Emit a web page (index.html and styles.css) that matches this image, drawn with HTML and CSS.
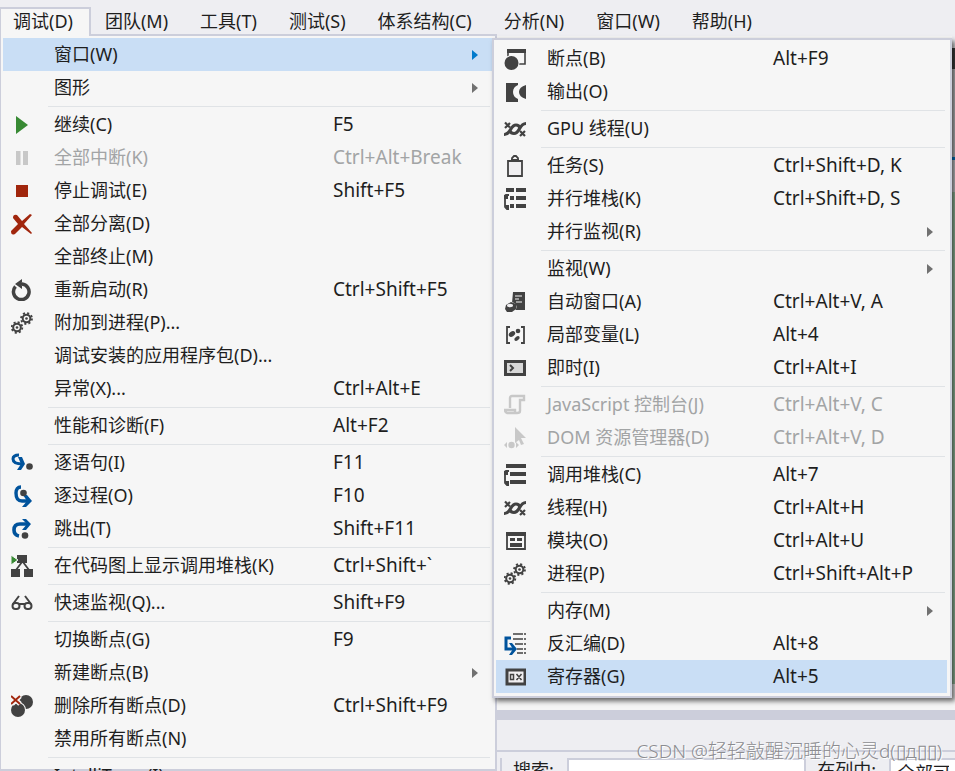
FILE: index.html
```html
<!DOCTYPE html>
<html lang="zh-CN">
<head>
<meta charset="utf-8">
<title>调试</title>
<link rel="stylesheet" href="styles.css">
</head>
<body>
<svg class="defs" aria-hidden="true">
  <symbol id="play" viewBox="0 0 22 22"><path fill="#388a34" d="M5 2L17 11L5 20z"/></symbol>
  <symbol id="pause" viewBox="0 0 22 22"><path fill="#c8c8c8" d="M5 4h4.500v14H5zM12 4h5v14h-5z"/></symbol>
  <symbol id="stop" viewBox="0 0 22 22"><path fill="#a1260d" d="M5 5h12v12H5z"/></symbol>
  <symbol id="detach" viewBox="0 0 22 22"><path fill="#a1260d" d="M2 5Q2 1 6 2L11 8L19 1L21 2L13 11L21 20L20 21L11 14L4 21Q0 23 0 18L7 11z"/></symbol>
  <symbol id="restart" viewBox="0 0 22 22"><path fill="none" stroke="#424242" stroke-width="3.500" d="M4.500 7.500A7.800 7.800 0 1 0 11 5H7"/><path fill="#424242" d="M4 5L11 0V3L9 5L11 7V10z"/></symbol>
  <symbol id="gears" viewBox="0 0 22 22"><g fill="none" stroke="#424242"><circle cx="15.500" cy="6.500" r="3.800" stroke-width="2"/><circle cx="15.500" cy="6.500" r="5.500" stroke-width="1.800" stroke-dasharray="2.100 2.220"/><circle cx="6" cy="15.500" r="3.800" stroke-width="2"/><circle cx="6" cy="15.500" r="5.300" stroke-width="1.800" stroke-dasharray="2.100 2.060"/></g><circle cx="15.500" cy="6.500" r="1.300" fill="#424242"/><circle cx="6" cy="15.500" r="1.300" fill="#424242"/></symbol>
  <symbol id="into" viewBox="0 0 22 22"><path fill="none" stroke="#00539c" stroke-width="3" d="M8 3Q2 3 2 7Q2 12 12 12"/><path fill="#00539c" d="M7 5h4l3 7l-4 6H6l4-6z"/><circle cx="18.500" cy="14.500" r="3.300" fill="#424242"/></symbol>
  <symbol id="over" viewBox="0 0 22 22"><path fill="none" stroke="#00539c" stroke-width="3.400" d="M10 2Q5 2 5 8Q5 16 11 16H17"/><path fill="#00539c" d="M12 10h4l5 6l-6 6h-4l5-6z"/><circle cx="12.500" cy="8" r="3.300" fill="#424242"/></symbol>
  <symbol id="out" viewBox="0 0 22 22"><path fill="none" stroke="#00539c" stroke-width="3.600" d="M8 18Q3 17 3 12Q3 6 9 6H17"/><path fill="#00539c" d="M11 1h4l5 5l-5 6h-4l5-6z"/><circle cx="14" cy="17.500" r="3.300" fill="#424242"/></symbol>
  <symbol id="map" viewBox="0 0 22 22"><path fill="#424242" d="M6 0h10v8H6zM0 14h9v8H0zM13 14h9v8h-9z"/><path fill="none" stroke="#424242" stroke-width="1.800" d="M11 7L5 15M12 7L18 15"/><path fill="#388a34" stroke="#f6f6f6" d="M0 0L7 5L0 10z"/></symbol>
  <symbol id="watch" viewBox="0 0 22 22"><g fill="none" stroke="#424242" stroke-width="2"><rect x="1.500" y="11" width="7" height="6" rx="3"/><rect x="13.500" y="11" width="7" height="6" rx="3"/><path d="M8 12H14M2 12L8 4M20 12L14 4"/></g></symbol>
  <symbol id="delbp" viewBox="0 0 22 22"><circle cx="15" cy="7" r="7" fill="#424242"/><circle cx="7" cy="15" r="8" fill="#f6f6f6"/><circle cx="7" cy="15" r="7" fill="#424242"/><path stroke="#f6f6f6" stroke-width="5" d="M1 1l8 8M9 1l-8 8"/><path stroke="#a1260d" stroke-width="2" d="M0 1l9 8M9 1l-9 8"/></symbol>

  <symbol id="bpwin" viewBox="0 0 22 22"><path fill="#424242" d="M3 1h19v4H3z"/><path fill="none" stroke="#424242" stroke-width="1.600" d="M4 4v6M21 4v12h-7"/><circle cx="7.500" cy="15" r="8" fill="#f6f6f6"/><circle cx="7.500" cy="15" r="7" fill="#424242"/></symbol>
  <symbol id="output" viewBox="0 0 22 22"><path fill="#424242" d="M2 2h12v2Q9 6 9 11Q9 16 14 18v3H2zM22 4v14Q15 16 15 11Q15 6 22 4z"/></symbol>
  <symbol id="threads" viewBox="0 0 22 22"><g fill="none" stroke="#424242"><path stroke-width="3.200" d="M0 16.500C7 17 6 7 12 7Q15 7 16 10M6 13Q7 15.500 10 15.500C16 15.500 15 5.500 22 5.500"/><path stroke-width="2.200" d="M1 4.500l5 5M6 5l-5 5M16 13l5 5M21 13l-5 5"/></g></symbol>
  <symbol id="tasks" viewBox="0 0 22 22"><path fill="#f0eff1" stroke="#424242" stroke-width="1.800" d="M4 6h14v15H4z"/><path fill="none" stroke="#424242" stroke-width="1.800" d="M8 7V3L10 1h2l2 2v4"/><path fill="#424242" d="M7 4h8v3H7z"/></symbol>
  <symbol id="pstacks" viewBox="0 0 22 22"><path fill="#424242" d="M2 0h8v4H2zM12 0h10v4H12zM6 8h4v4H6zM12 8h10v4H12zM6 16h4v4H6zM12 16h10v4H12z"/><path fill="none" stroke="#424242" stroke-width="1.800" d="M5 7H2Q1 7 1 9V19l2 2h2"/><path fill="#424242" d="M0 7h4v4H0zM1 17h4v4H2z"/></symbol>
  <symbol id="autos" viewBox="0 0 22 22"><path fill="#424242" d="M9 1h12v18H10V12H8z"/><path stroke="#f6f6f6" stroke-width="1.200" d="M11 5h7M11 8h4M12 11h6"/><ellipse cx="6.500" cy="16" rx="6" ry="5" fill="#f6f6f6"/><path fill="#424242" d="M2 14l5-3l5 2v5l-4 3H3l-2-3z"/><ellipse cx="6" cy="14.500" rx="3" ry="1.700" fill="#f0eff1"/></symbol>
  <symbol id="locals" viewBox="0 0 22 22"><path fill="none" stroke="#424242" stroke-width="1.800" d="M6 3H3v16h3M17 3h3v16h-3"/><g fill="#424242"><ellipse cx="8" cy="10" rx="3.500" ry="2.500" transform="rotate(-35 8 10)"/><circle cx="14" cy="7" r="2.300"/><ellipse cx="13" cy="14.500" rx="3" ry="1.900" transform="rotate(-35 13 14.500)"/></g></symbol>
  <symbol id="immediate" viewBox="0 0 22 22"><path fill="#d8d8d8" stroke="#424242" stroke-width="3" d="M1.500 4.500h19v13h-19z"/><path fill="none" stroke="#424242" stroke-width="2" d="M6 8l3 3l-3 3"/></symbol>
  <symbol id="script" viewBox="0 0 22 22"><path fill="none" stroke="#c8c8c8" stroke-width="2.400" d="M6 14V4Q6 2 8 2H20v4h-4V17Q16 19 13 19H3Q1 18 1 16H11V18"/></symbol>
  <symbol id="dom" viewBox="0 0 22 22"><path fill="#c8c8c8" d="M11 0L22 11H17L20 17L17 18L15 13L11 16zM0 18l3-3v6zM15 18l-3-3v6z"/><circle cx="7.500" cy="18" r="3.200" fill="#c8c8c8"/></symbol>
  <symbol id="stack" viewBox="0 0 22 22"><path fill="#424242" d="M2 0h20v4H2zM6 8h16v4H6zM6 16h16v4H6zM0 7h4v4H0zM1 17h4v4H2z"/><path fill="none" stroke="#424242" stroke-width="1.800" d="M5 7H2Q1 7 1 9V19l2 2h2"/></symbol>
  <symbol id="modules" viewBox="0 0 22 22"><path fill="none" stroke="#424242" stroke-width="1.800" d="M3 3h18v16H3z"/><path fill="#424242" d="M2 2h20v4H2zM6 8h5v3H6zM13 8h5v3h-5zM6 13h12v4H6z"/></symbol>
  <symbol id="disasm" viewBox="0 0 22 22"><path stroke="#424242" stroke-width="1.500" d="M9 1h10M20 1h2M9 6h10M20 6h2M11 11h8M20 11h2M13 16h6M20 16h2M13 20h6M20 20h2"/><path fill="none" stroke="#00539c" stroke-width="3" d="M7 5H2V16H9"/><path fill="#00539c" d="M5 10h3l5 6l-5 6H5l4-6z"/></symbol>
  <symbol id="registers" viewBox="0 0 22 22"><path fill="#f0eff1" stroke="#424242" stroke-width="3" d="M3 4h18v14H3z"/><path fill="none" stroke="#424242" stroke-width="1.500" d="M6.500 8.500h3v5h-3zM12.500 8l5 6M17.500 8l-5 6"/></symbol>
</svg>

<nav class="menubar">
  <button class="tab open">调试(D)</button>
  <button class="tab">团队(M)</button>
  <button class="tab">工具(T)</button>
  <button class="tab">测试(S)</button>
  <button class="tab">体系结构(C)</button>
  <button class="tab">分析(N)</button>
  <button class="tab">窗口(W)</button>
  <button class="tab">帮助(H)</button>
</nav>

<main class="workspace">
  <ul class="menu dropdown">
    <li class="entry">
      <button class="row active"><span></span><span>窗口(W)</span><kbd></kbd><i class="arrow"></i></button>
      <ul class="menu submenu">
        <li><button class="row"><svg class="icon"><use href="#bpwin"/></svg><span>断点(B)</span><kbd>Alt+F9</kbd></button></li>
        <li><button class="row"><svg class="icon"><use href="#output"/></svg><span>输出(O)</span></button></li>
        <li class="sep"></li>
        <li><button class="row"><svg class="icon"><use href="#threads"/></svg><span>GPU 线程(U)</span></button></li>
        <li class="sep"></li>
        <li><button class="row"><svg class="icon"><use href="#tasks"/></svg><span>任务(S)</span><kbd>Ctrl+Shift+D, K</kbd></button></li>
        <li><button class="row"><svg class="icon"><use href="#pstacks"/></svg><span>并行堆栈(K)</span><kbd>Ctrl+Shift+D, S</kbd></button></li>
        <li><button class="row"><span></span><span>并行监视(R)</span><kbd></kbd><i class="arrow"></i></button></li>
        <li class="sep"></li>
        <li><button class="row"><span></span><span>监视(W)</span><kbd></kbd><i class="arrow"></i></button></li>
        <li><button class="row"><svg class="icon"><use href="#autos"/></svg><span>自动窗口(A)</span><kbd>Ctrl+Alt+V, A</kbd></button></li>
        <li><button class="row"><svg class="icon"><use href="#locals"/></svg><span>局部变量(L)</span><kbd>Alt+4</kbd></button></li>
        <li><button class="row"><svg class="icon"><use href="#immediate"/></svg><span>即时(I)</span><kbd>Ctrl+Alt+I</kbd></button></li>
        <li class="sep"></li>
        <li><button class="row" disabled><svg class="icon"><use href="#script"/></svg><span>JavaScript 控制台(J)</span><kbd>Ctrl+Alt+V, C</kbd></button></li>
        <li><button class="row" disabled><svg class="icon"><use href="#dom"/></svg><span>DOM 资源管理器(D)</span><kbd>Ctrl+Alt+V, D</kbd></button></li>
        <li class="sep"></li>
        <li><button class="row"><svg class="icon"><use href="#stack"/></svg><span>调用堆栈(C)</span><kbd>Alt+7</kbd></button></li>
        <li><button class="row"><svg class="icon"><use href="#threads"/></svg><span>线程(H)</span><kbd>Ctrl+Alt+H</kbd></button></li>
        <li><button class="row"><svg class="icon"><use href="#modules"/></svg><span>模块(O)</span><kbd>Ctrl+Alt+U</kbd></button></li>
        <li><button class="row"><svg class="icon"><use href="#gears"/></svg><span>进程(P)</span><kbd>Ctrl+Shift+Alt+P</kbd></button></li>
        <li class="sep"></li>
        <li><button class="row"><span></span><span>内存(M)</span><kbd></kbd><i class="arrow"></i></button></li>
        <li><button class="row"><svg class="icon"><use href="#disasm"/></svg><span>反汇编(D)</span><kbd>Alt+8</kbd></button></li>
        <li><button class="row active"><svg class="icon"><use href="#registers"/></svg><span>寄存器(G)</span><kbd>Alt+5</kbd></button></li>
      </ul>
    </li>
    <li><button class="row"><span></span><span>图形</span><kbd></kbd><i class="arrow"></i></button></li>
    <li class="sep"></li>
    <li><button class="row"><svg class="icon"><use href="#play"/></svg><span>继续(C)</span><kbd>F5</kbd></button></li>
    <li><button class="row" disabled><svg class="icon"><use href="#pause"/></svg><span>全部中断(K)</span><kbd>Ctrl+Alt+Break</kbd></button></li>
    <li><button class="row"><svg class="icon"><use href="#stop"/></svg><span>停止调试(E)</span><kbd>Shift+F5</kbd></button></li>
    <li><button class="row"><svg class="icon"><use href="#detach"/></svg><span>全部分离(D)</span></button></li>
    <li><button class="row"><span></span><span>全部终止(M)</span></button></li>
    <li><button class="row"><svg class="icon"><use href="#restart"/></svg><span>重新启动(R)</span><kbd>Ctrl+Shift+F5</kbd></button></li>
    <li><button class="row"><svg class="icon"><use href="#gears"/></svg><span>附加到进程(P)...</span></button></li>
    <li><button class="row"><span></span><span>调试安装的应用程序包(D)...</span></button></li>
    <li><button class="row"><span></span><span>异常(X)...</span><kbd>Ctrl+Alt+E</kbd></button></li>
    <li class="sep"></li>
    <li><button class="row"><span></span><span>性能和诊断(F)</span><kbd>Alt+F2</kbd></button></li>
    <li class="sep"></li>
    <li><button class="row"><svg class="icon"><use href="#into"/></svg><span>逐语句(I)</span><kbd>F11</kbd></button></li>
    <li><button class="row"><svg class="icon"><use href="#over"/></svg><span>逐过程(O)</span><kbd>F10</kbd></button></li>
    <li><button class="row"><svg class="icon"><use href="#out"/></svg><span>跳出(T)</span><kbd>Shift+F11</kbd></button></li>
    <li class="sep"></li>
    <li><button class="row"><svg class="icon"><use href="#map"/></svg><span>在代码图上显示调用堆栈(K)</span><kbd>Ctrl+Shift+`</kbd></button></li>
    <li class="sep"></li>
    <li><button class="row"><svg class="icon"><use href="#watch"/></svg><span>快速监视(Q)...</span><kbd>Shift+F9</kbd></button></li>
    <li class="sep"></li>
    <li><button class="row"><span></span><span>切换断点(G)</span><kbd>F9</kbd></button></li>
    <li><button class="row"><span></span><span>新建断点(B)</span><kbd></kbd><i class="arrow"></i></button></li>
    <li><button class="row"><svg class="icon"><use href="#delbp"/></svg><span>删除所有断点(D)</span><kbd>Ctrl+Shift+F9</kbd></button></li>
    <li><button class="row"><span></span><span>禁用所有断点(N)</span></button></li>
    <li class="sep"></li>
    <li><button class="row"><span></span><span>IntelliTrace(I)</span></button></li>
  </ul>

  <section class="backdrop">
    <div class="editor">
      <div class="edge">
        <i class="edge-top"></i><i class="edge-icon"></i><i class="edge-bar"></i><i class="edge-line"></i><i class="edge-strip"></i><i class="edge-code"></i><i class="edge-end"></i>
      </div>
    </div>
    <div class="splitter"></div>
    <div class="caption"></div>
    <form class="search">
      <label for="query">搜索:</label>
      <input id="query" type="text">
      <label for="column">在列中:</label>
      <select id="column"><option>全部可见</option></select>
    </form>
  </section>
</main>
<div class="watermark">CSDN @轻轻敲醒沉睡的心灵d(▯д▯▯)</div>
</body>
</html>
```

FILE: styles.css
```css
* { box-sizing: border-box; }

body {
  margin: 0;
  height: 100vh;
  overflow: hidden;
  display: flex;
  flex-direction: column;
  background: #eeeef2;
  color: #1e1e1e;
  font: 18px/24px "Noto Sans", "Noto Sans CJK SC", sans-serif;
}

button, input, select, kbd { font: inherit; color: inherit; }
.defs { display: none; }

.menubar {
  display: flex;
  flex: none;
  height: 36px;
  padding-top: 7px;
}

.tab {
  border: 0;
  background: none;
  padding: 0 18px 2px 14px;
  white-space: nowrap;
}

.tab.open {
  position: relative;
  z-index: 1;
  border: 2px solid #cccedb;
  border-left-width: 1px;
  border-bottom: 0;
  background: #f6f6f6;
  padding: 0 16px 4px 12px;
}

.workspace {
  display: flex;
  flex: 1;
  min-height: 0;
}

.menu {
  list-style: none;
  margin: 0;
  background: #f6f6f6;
  border: 2px solid #cccedb;
  padding: 2px 3px 3px 2px;
}

.dropdown {
  --label: 279px;
  flex: none;
  width: 497px;
  margin-top: -2px;
  border-left-width: 1px;
}

.entry { position: relative; }

.submenu {
  --label: 226px;
  position: absolute;
  z-index: 2;
  top: 0;
  left: 100%;
  width: 460px;
  box-shadow: 3px 3px 5px rgba(0, 0, 0, 0.6);
}

.row {
  display: grid;
  grid-template-columns: 51px var(--label) 1fr auto;
  align-items: center;
  width: 100%;
  height: 33px;
  border: 0;
  padding: 0 14px 2px 0;
  background: none;
  text-align: left;
  white-space: nowrap;
}

.row.active { background: #c9def5; }
.row:disabled { color: #a2a4a5; }
.row kbd { font-size: 19px; }

.icon {
  width: 22px;
  height: 22px;
  margin: 2px 0 0 8px;
}

.arrow {
  margin-top: 2px;
  border: 5px solid transparent;
  border-left: 6px solid #717171;
  border-right: 0;
}

.row.active .arrow { border-left-color: #007acc; }

.sep {
  height: 1px;
  margin: 2px 2px 1px 45px;
  background: #e0e3e6;
}

.backdrop {
  display: flex;
  flex: 1;
  flex-direction: column;
  min-width: 0;
}

.editor {
  display: flex;
  flex: 1;
  justify-content: flex-end;
  background: #f5f5f5;
}

.edge {
  display: flex;
  flex-direction: column;
  width: 3px;
}

.edge-top { height: 12px; background: #eeeef2; }
.edge-icon { height: 21px; background: #424242; }
.edge-bar { height: 88px; background: #c5c5c8; }
.edge-line { height: 3px; background: #007acc; }
.edge-strip { height: 32px; background: #d0d0d4; }
.edge-code { flex: 1; background: #9dc4a5; }
.edge-end { height: 26px; background: #f5f5f5; }

.splitter { height: 10px; background: #cccedb; }
.caption { height: 32px; border-bottom: 2px solid #cccedb; }

.search {
  display: flex;
  height: 19px;
  padding: 6px 0 0 3px;
  overflow: hidden;
}

.search label { padding: 0 13px 0 11px; white-space: nowrap; }
.search label:first-child { border-left: 2px solid #cccedb; }

.search input,
.search select {
  appearance: none;
  height: 30px;
  border: 2px solid #cccedb;
  border-radius: 0;
  background: #fff;
  padding: 0 6px;
}

.search input { flex: 1; min-width: 0; }
.search select { width: 66px; border-right: 0; }

.watermark {
  position: absolute;
  right: 13px;
  bottom: 8px;
  color: #8c8c90;
  font-size: 19px;
  font-weight: 300;
  text-shadow: 1px 1px 0 #fff;
  white-space: nowrap;
}
```
